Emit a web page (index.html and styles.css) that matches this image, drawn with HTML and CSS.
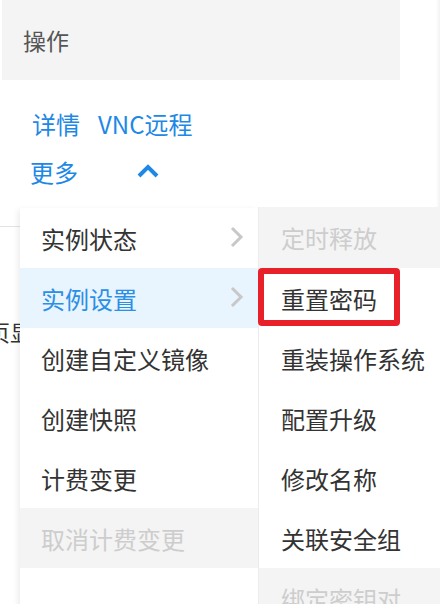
FILE: index.html
```html
<!DOCTYPE html>
<html lang="zh-CN">
<head>
<meta charset="utf-8">
<title>操作</title>
<link rel="stylesheet" href="styles.css">
</head>
<body>
<div class="page">
  <div class="edge-shadow"></div>
  <div class="header">操作</div>
  <div class="actions">
    <div class="row row-links"><a class="link">详情</a><a class="link">VNC远程</a></div>
    <div class="row row-more"><a class="link more">更多</a>
      <svg class="chev-up" width="24" height="16" viewBox="0 0 24 16"><path d="M3 13 L12 4 L21 13" fill="none" stroke="#1e88e5" stroke-width="4"/></svg>
    </div>
  </div>
  <div class="table-area">
    <div class="table-line"></div>
    <div class="cut-text">页显示</div>
  </div>

  <ul class="menu">
    <li class="item has-sub">实例状态<svg class="chev-r" width="14" height="22" viewBox="0 0 14 22"><path d="M2 2 L11 11 L2 20" fill="none" stroke="#c8c8c8" stroke-width="3"/></svg></li>
    <li class="item has-sub active">实例设置<svg class="chev-r" width="14" height="22" viewBox="0 0 14 22"><path d="M2 2 L11 11 L2 20" fill="none" stroke="#c8c8c8" stroke-width="3"/></svg></li>
    <li class="item">创建自定义镜像</li>
    <li class="item">创建快照</li>
    <li class="item">计费变更</li>
    <li class="item disabled">取消计费变更</li>
  </ul>

  <ul class="submenu">
    <li class="item disabled">定时释放</li>
    <li class="item marked">重置密码<span class="mark"></span></li>
    <li class="item">重装操作系统</li>
    <li class="item">配置升级</li>
    <li class="item">修改名称</li>
    <li class="item">关联安全组</li>
    <li class="item disabled">绑定密钥对</li>
  </ul>
</div>
</body>
</html>
```

FILE: styles.css
```css
* { box-sizing: border-box; }
html, body { margin: 0; padding: 0; background: #fff; }
body {
  font-family: "Noto Sans CJK SC", "Noto Sans", sans-serif;
  width: 440px;
  height: 604px;
  overflow: hidden;
}
.page {
  position: relative;
  width: 440px;
  height: 604px;
  overflow: hidden;
}
.edge-shadow {
  position: absolute;
  right: 0;
  top: 0;
  width: 4px;
  height: 207px;
  background: linear-gradient(to right, rgba(0,0,0,0), rgba(0,0,0,0.05));
}
.header {
  margin-left: 2px;
  width: 398px;
  height: 80px;
  background: #f4f4f4;
  color: #555;
  font-size: 23px;
  line-height: 80px;
  padding-left: 21px;
}
.actions {
  padding: 19px 0 0 32px;
}
.row {
  display: flex;
  align-items: center;
  height: 48px;
}
.link {
  color: #1e88e5;
  font-size: 24px;
  margin-right: 18px;
}
.more { margin-right: 0; }
.row-more { margin-left: -2px; }
.chev-up { margin-left: 58px; }
.table-area {
  margin-top: 31px;
}
.table-line {
  height: 1px;
  background: #e3e3e3;
}
.cut-text {
  margin-top: 90px;
  margin-left: -12px;
  font-size: 22px;
  color: #333;
  line-height: 28px;
}
ul { list-style: none; margin: 0; padding: 0; }
.menu {
  position: absolute;
  left: 20px;
  top: 208px;
  width: 238px;
  height: 400px;
  background: #fff;
  box-shadow: -2px 2px 6px rgba(0,0,0,0.08);
}
.submenu {
  position: absolute;
  left: 258px;
  top: 207px;
  width: 190px;
  height: 430px;
  background: #fff;
  border-left: 1px solid #ececec;
}
.item {
  position: relative;
  display: flex;
  align-items: center;
  height: 60px;
  padding-left: 21px;
  font-size: 24px;
  color: #333;
}
.submenu .item { padding-left: 22px; }
.submenu .item:first-child { height: 61px; }
.item.active {
  background: #e8f4fe;
  color: #2b8fe6;
}
.item.disabled {
  background: #f4f4f4;
  color: #cdcdcd;
}
.chev-r {
  position: absolute;
  right: 14px;
  top: 18px;
}
.mark {
  position: absolute;
  left: -1px;
  top: 0;
  width: 142px;
  height: 58px;
  border: 6px solid #e8202a;
  border-radius: 4px;
}
```
